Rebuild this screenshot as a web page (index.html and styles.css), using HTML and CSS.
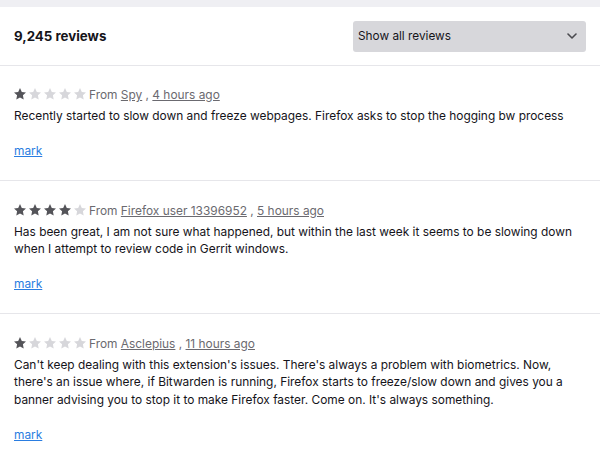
FILE: index.html
```html
<!DOCTYPE html>
<html lang="en">
<head>
  <meta charset="UTF-8">
  <title>Reviews</title>
  <link rel="stylesheet" href="styles.css">
</head>
<body>
  <div class="top-band"></div>

  <div class="reviews-header">
    <h2 class="reviews-count">9,245 reviews</h2>
    <div class="select">
      <span>Show all reviews</span>
      <svg class="chevron" width="10" height="6" viewBox="0 0 10 6"><path d="M1 1 L5 5 L9 1" fill="none" stroke="#4a4a4f" stroke-width="1.6" stroke-linecap="round" stroke-linejoin="round"/></svg>
    </div>
  </div>

  <ul class="review-list">
    <li class="review">
      <div class="meta"><span class="stars" data-rating="1"></span>From <a href="#">Spy</a> , <a href="#">4 hours ago</a></div>
      <p class="body">Recently started to slow down and freeze webpages. Firefox asks to stop the hogging bw process</p>
      <a class="mark" href="#">mark</a>
    </li>
    <li class="review">
      <div class="meta"><span class="stars" data-rating="4"></span>From <a href="#">Firefox user 13396952</a> , <a href="#">5 hours ago</a></div>
      <p class="body">Has been great, I am not sure what happened, but within the last week it seems to be slowing down when I attempt to review code in Gerrit windows.</p>
      <a class="mark" href="#">mark</a>
    </li>
    <li class="review">
      <div class="meta"><span class="stars" data-rating="1"></span>From <a href="#">Asclepius</a> , <a href="#">11 hours ago</a></div>
      <p class="body">Can't keep dealing with this extension's issues. There's always a problem with biometrics. Now, there's an issue where, if Bitwarden is running, Firefox starts to freeze/slow down and gives you a banner advising you to stop it to make Firefox faster. Come on. It's always something.</p>
      <a class="mark" href="#">mark</a>
    </li>
  </ul>

  <script>
    // draw the star rows
    const star = 'M6 0 L7.8 3.9 L12 4.4 L8.9 7.2 L9.7 11.5 L6 9.4 L2.3 11.5 L3.1 7.2 L0 4.4 L4.2 3.9 Z';
    document.querySelectorAll('.stars').forEach(el => {
      const rating = parseInt(el.dataset.rating);
      let html = '';
      for (let i = 0; i < 5; i++) {
        const cls = i < rating ? 'star on' : 'star';
        html += '<svg class="' + cls + '" width="12" height="12" viewBox="0 0 12 12"><path d="' + star + '" stroke-linejoin="round"/></svg>';
      }
      el.innerHTML = html;
    });
  </script>
</body>
</html>
```

FILE: styles.css
```css
body {
  margin: 0;
  font-family: Inter, "Noto Sans", Arial, sans-serif;
  font-size: 11.9px;
  color: #15141a;
  background: #fff;
}

.top-band {
  height: 7px;
  background-color: #efeff3;
}

.reviews-header {
  display: flex;
  align-items: center;
  justify-content: space-between;
  height: 58px;
  padding: 0 14px;
  border-bottom: 1px solid #e6e6ea;
}

.reviews-count {
  margin: 0;
  font-size: 13.3px;
  font-weight: 700;
}

.select {
  display: flex;
  align-items: center;
  justify-content: space-between;
  width: 220px;
  height: 31px;
  padding: 0 8px 0 5px;
  background-color: #d7d7db;
  border-radius: 3px;
  font-size: 11.8px;
}

.chevron {
  margin-right: 1px;
}

.review-list {
  list-style: none;
  margin: 0;
  padding: 0;
}

.review {
  padding: 20px 14px 20px;
  border-bottom: 1px solid #e6e6ea;
}

.review + .review {
  padding-top: 21px;
}

.meta {
  height: 18px;
  line-height: 18px;
  color: #6b6a70;
}

.meta a {
  color: #6b6a70;
}

.stars {
  display: inline-flex;
  gap: 3px;
  margin-right: 3px;
  vertical-align: -1px;
}

.star {
  fill: #d7d7db;
}

.star.on {
  fill: #545459;
}

.body {
  margin: 3px 0 17px;
  line-height: 17.6px;
}

.mark {
  display: inline-block;
  line-height: 18px;
  color: #2a7de1;
}
```
